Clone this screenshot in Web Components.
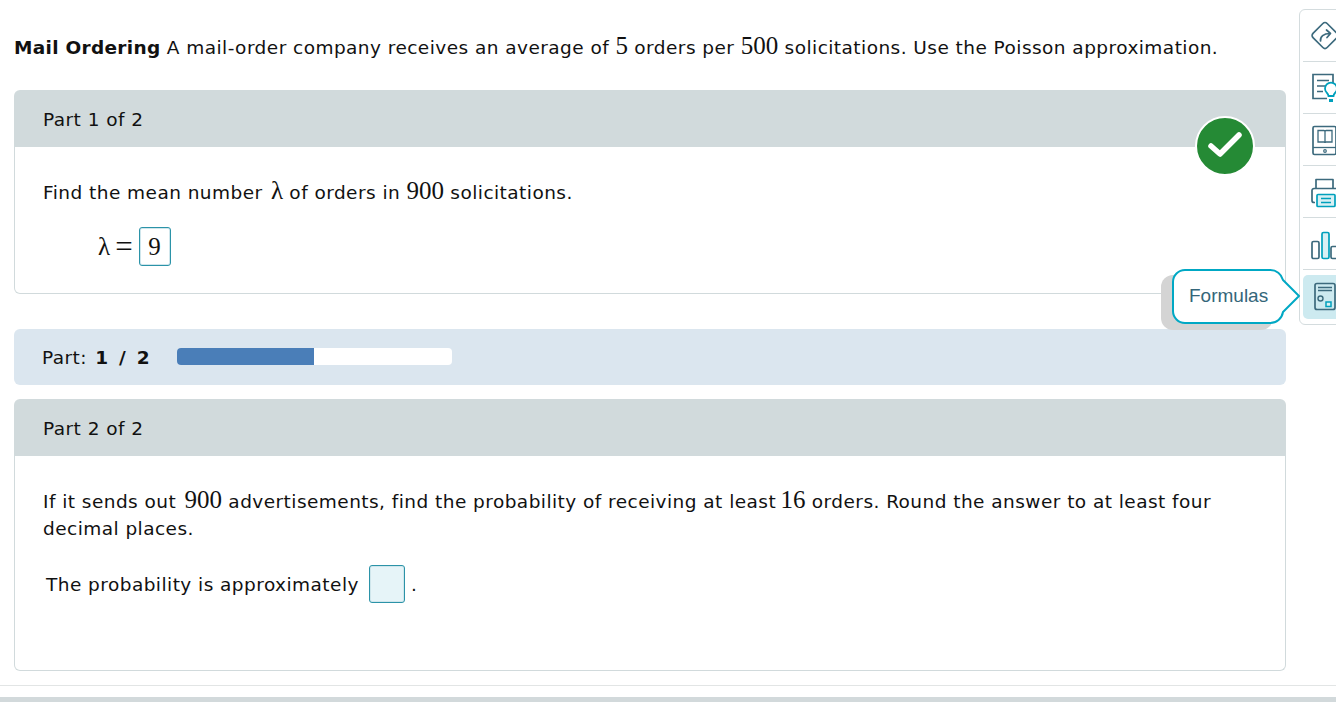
<!DOCTYPE html>
<html>
<head>
<meta charset="utf-8">
<title>Mail Ordering</title>
<style>
  html, body { margin: 0; height: 702px; overflow: hidden; background: #fff; }
  body { font: 18.5px/27px "DejaVu Sans", Verdana, sans-serif; color: #111; letter-spacing: .45px; }
  b { letter-spacing: .3px; }
  .m { font-family: "Liberation Serif", "Times New Roman", serif; font-size: 25px; letter-spacing: 0; line-height: 20px; }
</style>
</head>
<body>
<q-page>
  <div slot="intro"><b>Mail Ordering</b> A mail-order company receives an average of <span class="m">5</span> orders per <span class="m">500</span> solicitations. Use the Poisson approximation.</div>

  <q-part slot="first" title="Part 1 of 2" height="147" done>
    <div>Find the mean number <span class="m" style="margin-left:2px">λ</span> of orders in <span class="m">900</span> solicitations.</div>
    <q-answer-line style="margin:21px 0 0 55px"><span class="m">λ</span><span class="m" style="margin:0 6px 0 5px;font-size:31px">=</span><q-box value="9"></q-box></q-answer-line>
  </q-part>

  <q-progress slot="progress" current="1" total="2"></q-progress>

  <q-part slot="second" title="Part 2 of 2" height="215">
    <div>If it sends out <span class="m" style="margin-left:2px">900</span> advertisements, find the probability of receiving at least <span class="m" style="margin-left:-2px">16</span> orders. Round the answer to at least four</div>
    <div>decimal places.</div>
    <q-answer-line style="margin:23px 0 0 3px"><span>The probability is approximately</span><q-box empty style="margin:0 6px 0 10px"></q-box><span>.</span></q-answer-line>
  </q-part>
</q-page>
<q-toolbar></q-toolbar>
<q-check></q-check>
<q-tip>Formulas</q-tip>

<script>
customElements.define('q-page', class QPage extends HTMLElement {
  constructor() {
    super()
    this.attachShadow({mode: 'open'}).innerHTML = `
    <style>
      :host { display: block; width: 1336px; height: 702px; box-sizing: border-box; }
      #wrap { display: flex; flex-direction: column; width: 1272px; margin-left: 14px; }
      #intro { height: 90px; padding-top: 34px; box-sizing: border-box; white-space: nowrap; }
      #bar { margin-top: 35px; }
      #second { margin-top: 14px; }
      #foot { position: absolute; left: 0; right: 0; top: 685px; height: 1px; background: #e2e5e5; }
      #band { position: absolute; left: 0; right: 0; top: 697px; height: 5px; background: #d2d9db; }
    </style>
    <div id="wrap">
      <div id="intro"><slot name="intro"></slot></div>
      <slot name="first"></slot>
      <div id="bar"><slot name="progress"></slot></div>
      <div id="second"><slot name="second"></slot></div>
    </div>
    <div id="foot"></div>
    <div id="band"></div>`
  }
})

customElements.define('q-part', class QPart extends HTMLElement {
  connectedCallback() {
    const height = this.getAttribute('height')
    this.attachShadow({mode: 'open'}).innerHTML = `
    <style>
      :host { display: block; }
      #head { height: 57px; background: #d1dadc; padding: 16px 29px 0; box-sizing: border-box; line-height: 27px; border-radius: 6px 6px 0 0; }
      #body { height: ${height}px; box-sizing: border-box; padding: 32px 28px 0; border: 1px solid #d1dadc; border-top: 0; border-radius: 0 0 6px 6px; }
    </style>
    <div id="head">${this.getAttribute('title')}</div>
    <div id="body"><slot></slot></div>`
  }
})

customElements.define('q-answer-line', class QAnswerLine extends HTMLElement {
  constructor() {
    super()
    this.attachShadow({mode: 'open'}).innerHTML = `
    <style>:host { display: flex; align-items: center; }</style><slot></slot>`
  }
})

customElements.define('q-box', class QBox extends HTMLElement {
  connectedCallback() {
    const empty = this.hasAttribute('empty')
    const size = empty ? 'width:36px;height:38px;background:#e6f4f8;' : 'width:32px;height:39px;background:#fff;'
    this.attachShadow({mode: 'open'}).innerHTML = `
    <style>
      :host { display: inline-block; }
      #b { ${size} box-sizing: border-box; border: 1px solid #2b93a8; border-radius: 3px;
        box-shadow: inset 0 0 0 1px #cfe6ec; display: flex; align-items: center; justify-content: center;
        font: 25px "Liberation Serif", serif; letter-spacing: 0; }
    </style>
    <div id="b">${this.getAttribute('value') || ''}</div>`
  }
})

customElements.define('q-progress', class QProgress extends HTMLElement {
  connectedCallback() {
    const cur = this.getAttribute('current')
    const total = this.getAttribute('total')
    this.attachShadow({mode: 'open'}).innerHTML = `
    <style>
      :host { display: block; }
      #bar { height: 56px; background: #dbe6ef; border-radius: 6px; display: flex; align-items: center; padding-left: 28px; }
      #label { width: 135px; white-space: nowrap; }
      b { font-weight: bold; letter-spacing: 2.2px; margin-left: 2px; }
      #track { width: 275px; height: 17px; margin-bottom: 1px; background: #fff; border-radius: 4px; overflow: hidden; }
      #fill { width: 137px; height: 100%; background: #4a7eb8; }
    </style>
    <div id="bar">
      <div id="label">Part: <b>${cur} / ${total}</b></div>
      <div id="track"><div id="fill"></div></div>
    </div>`
  }
})

// every icon sits in a 36x36 box, dark strokes plus one teal accent
const ICONS = [
  `<g fill="none" stroke="#3c6a7d" stroke-width="1.7" stroke-linejoin="round" stroke-linecap="round"><rect x="5" y="7.500" width="20" height="20" rx="3" transform="rotate(45 15 17.500)"/><path d="M10.500 23c-.5-4.500 3-7.500 9.500-7.500M16.500 12l4 3.500-3.500 4"/></g>`,
  `<g fill="none" stroke="#3c6a7d" stroke-width="1.7"><path d="M23 14V4.500H3v24h14"/><path d="M7 10.500h12M7 16h10M7 21.500h6"/></g><path d="M17 26a6 6 0 1 1 8 0c-1 1-1.400 1.800-1.500 3h-5c-.1-1.200-.5-2-1.500-3z" transform="translate(0 -3)" fill="#fff" stroke="#00a0bc" stroke-width="1.800"/><path d="M19 29h4v3h-4z" fill="#00a0bc"/>`,
  `<g fill="none" stroke="#3c6a7d" stroke-width="1.700"><rect x="3" y="4.500" width="23" height="28" rx="1.500"/><path d="M8 8.500h6c.7 0 1 .5 1 1V21c0-.6-.4-1-1-1H8zM22 8.500h-6c-.7 0-1 .5-1 1V21c0-.6.4-1 1-1h6z" stroke-width="1.300"/><path d="M3 25.500h23" stroke-width="1.300"/><circle cx="15" cy="29" r="1.300" stroke-width="1.200"/></g>`,
  `<g fill="none" stroke="#3c6a7d" stroke-width="1.700" stroke-linejoin="round"><path d="M6 14V5.500h17V14M5 28.500H4a2 2 0 0 1-2-2V16.500a2 2 0 0 1 2-2h26"/></g><g fill="#d8f0f4" stroke="#00a0bc" stroke-width="1.700"><rect x="7" y="20.500" width="18" height="12" rx="1"/><path d="M11 24.500h10M11 28.500h10" fill="none"/></g><path d="M26 24.500h6" stroke="#3c6a7d" stroke-width="1.700"/>`,
  `<g fill="none" stroke="#3c6a7d" stroke-width="1.700"><rect x="2" y="15.500" width="7" height="17" rx="1.500"/><rect x="21" y="20.500" width="7" height="12" rx="1.500"/></g><rect x="12" y="6.500" width="7" height="26" rx="1.500" fill="#d8f0f4" stroke="#00a0bc" stroke-width="1.700"/>`,
  `<g fill="none" stroke="#3c6a7d" stroke-width="1.700"><rect x="5" y="4.500" width="20" height="26" rx="2"/><path d="M8 8.500h14M8 11.500h14" stroke-width="1.300"/><circle cx="10.500" cy="19.500" r="2.500" stroke-width="1.400"/></g><rect x="16" y="23" width="5" height="4.500" fill="#d8f0f4" stroke="#00a0bc" stroke-width="1.500"/>`
]

customElements.define('q-toolbar', class QToolbar extends HTMLElement {
  connectedCallback() {
    const items = ICONS.map((p, i) => `<div class="item ${i === 5 ? 'on' : ''}"><svg width="36" height="36" viewBox="0 0 36 36">${p}</svg></div>`).join('')
    this.attachShadow({mode: 'open'}).innerHTML = `
    <style>
      :host { display: block; position: absolute; left: 1299px; top: 9px; width: 60px; height: 316px; box-sizing: border-box;
        border: 1px solid #d4dcde; border-radius: 6px; background: #fff; padding: 0 3px; }
      .item { height: 52px; border-bottom: 1px solid #d4dcde; box-sizing: border-box; display: flex; align-items: center; padding-left: 7px; }
      .item:first-child { height: 51px; }
      .item.on { border: 0; background: #cdeaf0; height: 44px; margin-top: 5px; border-radius: 5px; }
    </style>
    ${items}`
  }
})

customElements.define('q-check', class QCheck extends HTMLElement {
  constructor() {
    super()
    this.attachShadow({mode: 'open'}).innerHTML = `
    <style>:host { display: block; position: absolute; left: 1195px; top: 116px; width: 60px; height: 60px; }</style>
    <svg width="60" height="60" viewBox="0 0 60 60">
      <circle cx="30" cy="30" r="29" fill="#258a35" stroke="#fff" stroke-width="2"/>
      <path d="M16 30l9 8 19-19" fill="none" stroke="#fff" stroke-width="5.500" stroke-linecap="round" stroke-linejoin="round"/>
    </svg>`
  }
})

customElements.define('q-tip', class QTip extends HTMLElement {
  constructor() {
    super()
    this.attachShadow({mode: 'open'}).innerHTML = `
    <style>
      :host { display: block; position: absolute; left: 1161px; top: 268px; width: 140px; height: 63px; }
      svg { position: absolute; left: 0; top: 0; }
      span { position: absolute; left: 28px; top: 14px; font: 19px/27px "Liberation Sans", Arial, sans-serif; letter-spacing: 0; color: #34667a; }
    </style>
    <svg width="140" height="63" viewBox="0 0 140 63">
      <rect x="0" y="7" width="112" height="55" rx="12" fill="#d4d4d4"/>
      <path d="M24 2h85a13 13 0 0 1 13 10l16 16-16 16a13 13 0 0 1-13 11H24a12 12 0 0 1-12-12V14A12 12 0 0 1 24 2z" fill="#fff" stroke="#00a8c4" stroke-width="2" stroke-linejoin="round"/>
    </svg>
    <span><slot></slot></span>`
  }
})
</script>
</body>
</html>
